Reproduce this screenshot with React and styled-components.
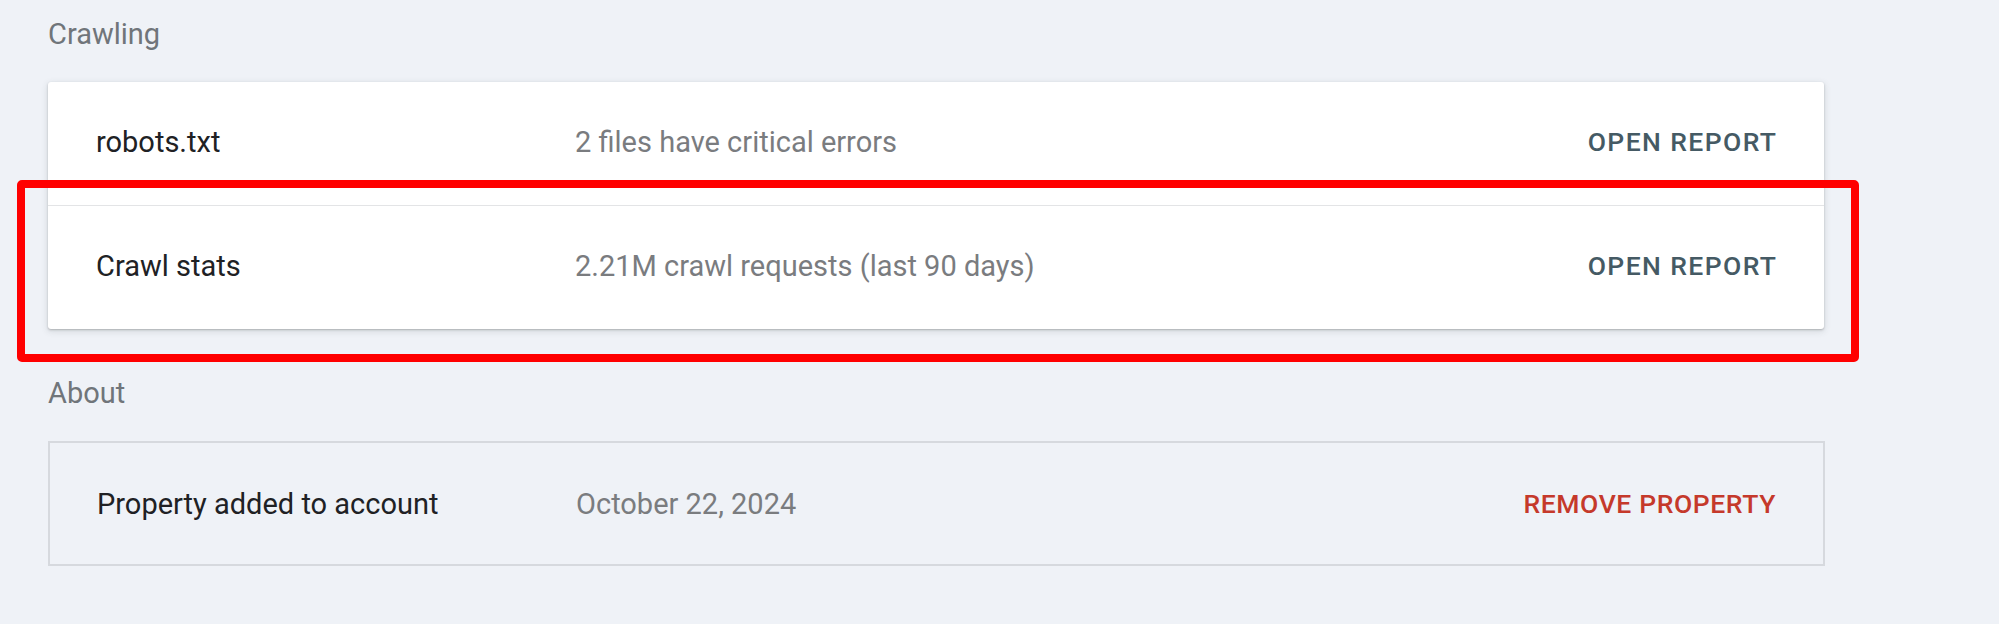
import React from "react";
import styled, { createGlobalStyle } from "styled-components";

const GlobalStyle = createGlobalStyle`
    html, body {
        margin: 0;
        padding: 0;
        background: #eff2f7;
        font-family: Roboto, "Noto Sans", Arial, sans-serif;
    }
`;

const crawling = [
    { title: "robots.txt", detail: "2 files have critical errors", action: "OPEN REPORT" },
    { title: "Crawl stats", detail: "2.21M crawl requests (last 90 days)", action: "OPEN REPORT", highlighted: true },
];

function App() {
    return (
        <PageStyled>
            <GlobalStyle />
            <Section>
                <SectionLabel>Crawling</SectionLabel>
                <Card>
                    {crawling.map((row, i) => (
                        <Row key={row.title} $divider={i > 0}>
                            <Title>{row.title}</Title>
                            <Detail>{row.detail}</Detail>
                            <Action>{row.action}</Action>
                            {row.highlighted && <Highlight />}
                        </Row>
                    ))}
                </Card>
            </Section>
            <Section>
                <SectionLabel>About</SectionLabel>
                <OutlineCard>
                    <Row>
                        <Title>Property added to account</Title>
                        <Detail>October 22, 2024</Detail>
                        <Action $danger>REMOVE PROPERTY</Action>
                    </Row>
                </OutlineCard>
            </Section>
        </PageStyled>
    );
}

const PageStyled = styled.div`
    display: flex;
    flex-direction: column;
    gap: 48px;
    width: 1824px;
    padding: 18px 0 0 48px;
    min-height: 624px;
    box-sizing: border-box;
`;

const Section = styled.section`
    display: flex;
    flex-direction: column;
`;

const SectionLabel = styled.h2`
    margin: 0 0 32px;
    font-size: 29px;
    line-height: 32px;
    font-weight: 400;
    color: #70757a;
`;

const Card = styled.div`
    background: #ffffff;
    border-radius: 3px;
    box-shadow: 0 1px 2px rgba(60, 64, 67, 0.3), 0 2px 6px 1px rgba(60, 64, 67, 0.12);
`;

const OutlineCard = styled.div`
    border: 2px solid #d6d9de;
    margin-right: -1px;
`;

const Row = styled.div`
    position: relative;
    display: grid;
    grid-template-columns: 479px 1fr auto;
    align-items: center;
    height: 119px;
    padding: 0 48px 4px;
    border-top: ${(p) => (p.$divider ? "1px solid #e3e4e6" : "none")};
    ${OutlineCard} & {
        height: 121px;
        padding: 0 47px;
    }
`;

const Title = styled.div`
    font-size: 29px;
    color: #202124;
`;

const Detail = styled.div`
    font-size: 29px;
    color: #7a7c7f;
`;

const Action = styled.div`
    font-size: 26.5px;
    font-weight: 500;
    letter-spacing: ${(p) => (p.$danger ? "0.6px" : "1.4px")};
    color: ${(p) => (p.$danger ? "#c5392b" : "#455a64")};
    margin-right: ${(p) => (p.$danger ? "0" : "-1.4px")};
`;

// red annotation frame drawn over the highlighted row
const Highlight = styled.div`
    position: absolute;
    left: -31px;
    right: -35px;
    top: -26px;
    bottom: -33px;
    border: 8px solid #ff0000;
    border-radius: 5px;
    pointer-events: none;
`;

export default App;
